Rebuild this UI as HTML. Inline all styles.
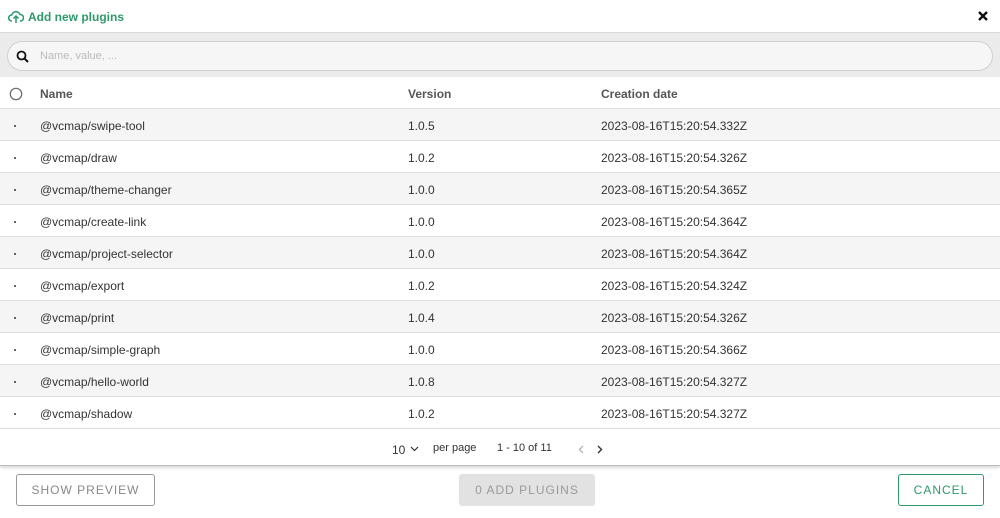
<!DOCTYPE html>
<html><head><style>
*{box-sizing:border-box;margin:0;padding:0}
body{width:1000px;height:518px;background:#fff;font-family:"Liberation Sans",sans-serif;color:#333;font-size:12px;position:relative;overflow:hidden}
.title{position:absolute;left:8px;top:8px;height:18px;display:flex;align-items:center;color:#2e9a6b;font-weight:bold;font-size:12px}
.title svg{margin-right:4px}
.close{position:absolute;left:977px;top:10px}
.band{position:absolute;left:0;top:32px;width:1000px;height:45px;background:#ebebeb;border-top:1px solid #d8d8d8}
.search{position:absolute;left:7px;top:8px;width:986px;height:30px;border:1px solid #cfcfcf;border-radius:15px;background:#f6f6f6}
.search svg{position:absolute;left:8px;top:8px}
.search span{position:absolute;left:32px;top:8px;color:#bbb;font-size:11px}
.hdr{position:absolute;left:0;top:77px;width:1000px;height:32px;border-bottom:1px solid #ddd;font-weight:bold;color:#555}
.row{position:absolute;left:0;width:1000px;height:32px;border-bottom:1px solid #ddd}
.row.g{background:#f5f5f5}
.c{position:absolute;top:10px;white-space:nowrap}
.dot{position:absolute;left:14px;top:16px;width:2px;height:2px;background:#333;border-radius:1px}
.foot{position:absolute;left:0;top:429px;width:1000px;height:37px;border-bottom:1px solid #bbb;box-shadow:0 2px 3px rgba(0,0,0,.15)}
.btn{position:absolute;top:474px;height:32px;border-radius:3px;font-size:12px;letter-spacing:1px;display:flex;align-items:center;justify-content:center}
</style></head><body>
<div class="title"><svg width="16" height="14" viewBox="0 0 16 14"><path d="M4 11H3.5A3 3 0 0 1 3.8 5 4.3 4.3 0 0 1 12 4.5 3 3 0 0 1 12.5 11H12" fill="none" stroke="#2e9a6b" stroke-width="1.5"/><path d="M8 13V6M5.5 8.5 8 6l2.5 2.5" fill="none" stroke="#2e9a6b" stroke-width="1.5"/></svg>Add new plugins</div>
<svg class="close" width="12" height="12" viewBox="0 0 12 12"><path d="M2 2l8 8M10 2l-8 8" stroke="#111" stroke-width="2.4"/></svg>
<div class="band"><div class="search"><svg width="14" height="14" viewBox="0 0 14 14"><circle cx="5.5" cy="5.5" r="4" fill="none" stroke="#111" stroke-width="1.8"/><path d="M8.5 8.5l3.5 3.5" stroke="#111" stroke-width="2"/></svg><span>Name, value, ...</span></div></div>
<div class="hdr"><svg style="position:absolute;left:9px;top:10px" width="14" height="14"><circle cx="7" cy="7" r="5.7" fill="none" stroke="#666" stroke-width="1.2"/></svg><span class="c" style="left:40px">Name</span><span class="c" style="left:408px">Version</span><span class="c" style="left:601px">Creation date</span></div>
<div class="row g" style="top:109px"><i class="dot"></i><span class="c" style="left:40px">@vcmap/swipe-tool</span><span class="c" style="left:408px">1.0.5</span><span class="c" style="left:601px">2023-08-16T15:20:54.332Z</span></div>
<div class="row" style="top:141px"><i class="dot"></i><span class="c" style="left:40px">@vcmap/draw</span><span class="c" style="left:408px">1.0.2</span><span class="c" style="left:601px">2023-08-16T15:20:54.326Z</span></div>
<div class="row g" style="top:173px"><i class="dot"></i><span class="c" style="left:40px">@vcmap/theme-changer</span><span class="c" style="left:408px">1.0.0</span><span class="c" style="left:601px">2023-08-16T15:20:54.365Z</span></div>
<div class="row" style="top:205px"><i class="dot"></i><span class="c" style="left:40px">@vcmap/create-link</span><span class="c" style="left:408px">1.0.0</span><span class="c" style="left:601px">2023-08-16T15:20:54.364Z</span></div>
<div class="row g" style="top:237px"><i class="dot"></i><span class="c" style="left:40px">@vcmap/project-selector</span><span class="c" style="left:408px">1.0.0</span><span class="c" style="left:601px">2023-08-16T15:20:54.364Z</span></div>
<div class="row" style="top:269px"><i class="dot"></i><span class="c" style="left:40px">@vcmap/export</span><span class="c" style="left:408px">1.0.2</span><span class="c" style="left:601px">2023-08-16T15:20:54.324Z</span></div>
<div class="row g" style="top:301px"><i class="dot"></i><span class="c" style="left:40px">@vcmap/print</span><span class="c" style="left:408px">1.0.4</span><span class="c" style="left:601px">2023-08-16T15:20:54.326Z</span></div>
<div class="row" style="top:333px"><i class="dot"></i><span class="c" style="left:40px">@vcmap/simple-graph</span><span class="c" style="left:408px">1.0.0</span><span class="c" style="left:601px">2023-08-16T15:20:54.366Z</span></div>
<div class="row g" style="top:365px"><i class="dot"></i><span class="c" style="left:40px">@vcmap/hello-world</span><span class="c" style="left:408px">1.0.8</span><span class="c" style="left:601px">2023-08-16T15:20:54.327Z</span></div>
<div class="row" style="top:397px"><i class="dot"></i><span class="c" style="left:40px">@vcmap/shadow</span><span class="c" style="left:408px">1.0.2</span><span class="c" style="left:601px">2023-08-16T15:20:54.327Z</span></div>
<div class="foot">
<span class="c" style="left:392px;top:14px">10</span>
<svg style="position:absolute;left:410px;top:17px" width="9" height="6"><path d="M1 1l3.5 3.5L8 1" fill="none" stroke="#333" stroke-width="1.2"/></svg>
<span class="c" style="left:433px;top:13px;font-size:11px">per page</span>
<span class="c" style="left:497px;top:13px;font-size:11px">1 - 10 of 11</span>
<svg style="position:absolute;left:578px;top:16px" width="6" height="9"><path d="M5 1L1.5 4.5 5 8" fill="none" stroke="#aaa" stroke-width="1.2"/></svg>
<svg style="position:absolute;left:597px;top:16px" width="6" height="9"><path d="M1 1l3.5 3.5L1 8" fill="none" stroke="#333" stroke-width="1.4"/></svg>
</div>
<div class="btn" style="left:16px;width:139px;border:1px solid #999;color:#888">SHOW PREVIEW</div>
<div class="btn" style="left:459px;width:136px;background:#e2e2e2;color:#9a9a9a">0 ADD PLUGINS</div>
<div class="btn" style="left:898px;width:86px;border:1px solid #2e9a6b;color:#2e9a6b">CANCEL</div>
</body></html>
